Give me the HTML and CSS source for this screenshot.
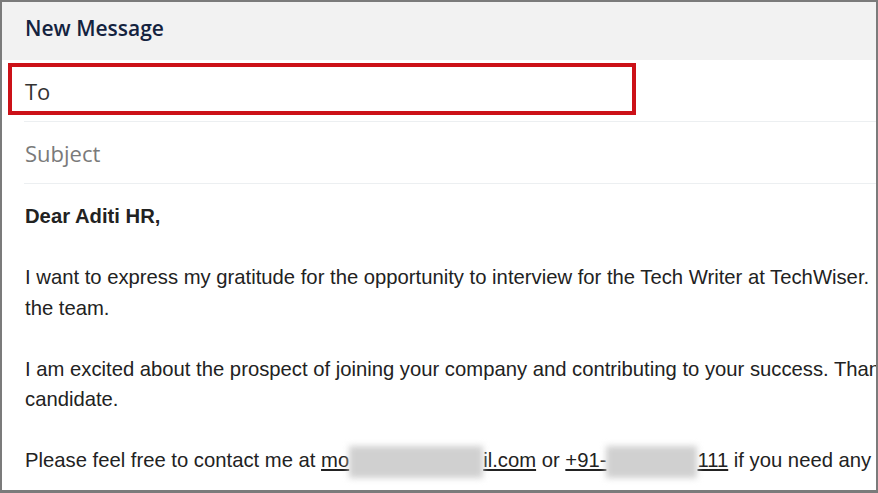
FILE: index.html
```html
<!DOCTYPE html>
<html>
<head>
<meta charset="utf-8">
<link rel="stylesheet" href="styles.css">
</head>
<body>
<div class="frame">
  <div class="header">New Message</div>
  <div class="field field-to">
    <span class="to-label">To</span>
    <div class="highlight"></div>
  </div>
  <div class="field field-subject"><span class="subject-label">Subject</span></div>
  <div class="body">
    <p class="greeting">Dear Aditi HR,</p>
    <p>I want to express my gratitude for the opportunity to interview for the Tech Writer at TechWiser. I look forward to potentially joining<br>the team.</p>
    <p>I am excited about the prospect of joining your company and contributing to your success. Thank you for considering me as a<br>candidate.</p>
    <p>Please feel free to contact me at <a class="link">mo<span class="blur blur-mail"></span>il.com</a> or <a class="link">+91-<span class="blur blur-phone"></span>111</a> if you need any further information.</p>
  </div>
</div>
</body>
</html>
```
FILE: styles.css
```css
html, body {
  margin: 0;
  padding: 0;
  background: #ffffff;
}
.frame {
  position: relative;
  width: 878px;
  height: 493px;
  box-sizing: border-box;
  border-top: 2px solid #7b7b7b;
  border-left: 2px solid #7b7b7b;
  border-right: 2px solid #7b7b7b;
  border-bottom: 3px solid #7b7b7b;
  overflow: hidden;
  background: #ffffff;
}
.header {
  height: 58px;
  box-sizing: border-box;
  background: #f2f2f2;
  padding: 11px 0 0 23px;
  font-family: "Open Sans", Roboto, sans-serif;
  font-size: 21px;
  font-weight: 600;
  line-height: 30px;
  color: #14233f;
}
.field {
  position: relative;
  height: 61px;
  margin-left: 22px;
  border-bottom: 1px solid #eceff1;
  display: flex;
  align-items: center;
  padding-left: 1px;
  font-family: "Open Sans", Roboto, sans-serif;
  font-size: 22px;
}
.to-label {
  color: #333333;
}
.subject-label {
  color: #7a7a7a;
}
.highlight {
  position: absolute;
  left: -16px;
  top: 3px;
  width: 628px;
  height: 52px;
  box-sizing: border-box;
  border: 4px solid #cc1118;
}
.body {
  padding: 17px 0 0 23px;
  width: 1300px;
  font-family: "Liberation Sans", Arial, sans-serif;
  font-size: 20.25px;
  line-height: 30.5px;
  color: #222222;
}
.body p {
  margin: 0 0 30.5px 0;
  white-space: nowrap;
}
.greeting {
  font-weight: bold;
}
.link {
  color: #222222;
  text-decoration: underline;
}
.blur {
  display: inline-block;
  vertical-align: middle;
  height: 32px;
  background: #d0d0d0;
  filter: blur(3px);
}
.blur-mail {
  width: 134px;
}
.blur-phone {
  width: 91px;
}
```
